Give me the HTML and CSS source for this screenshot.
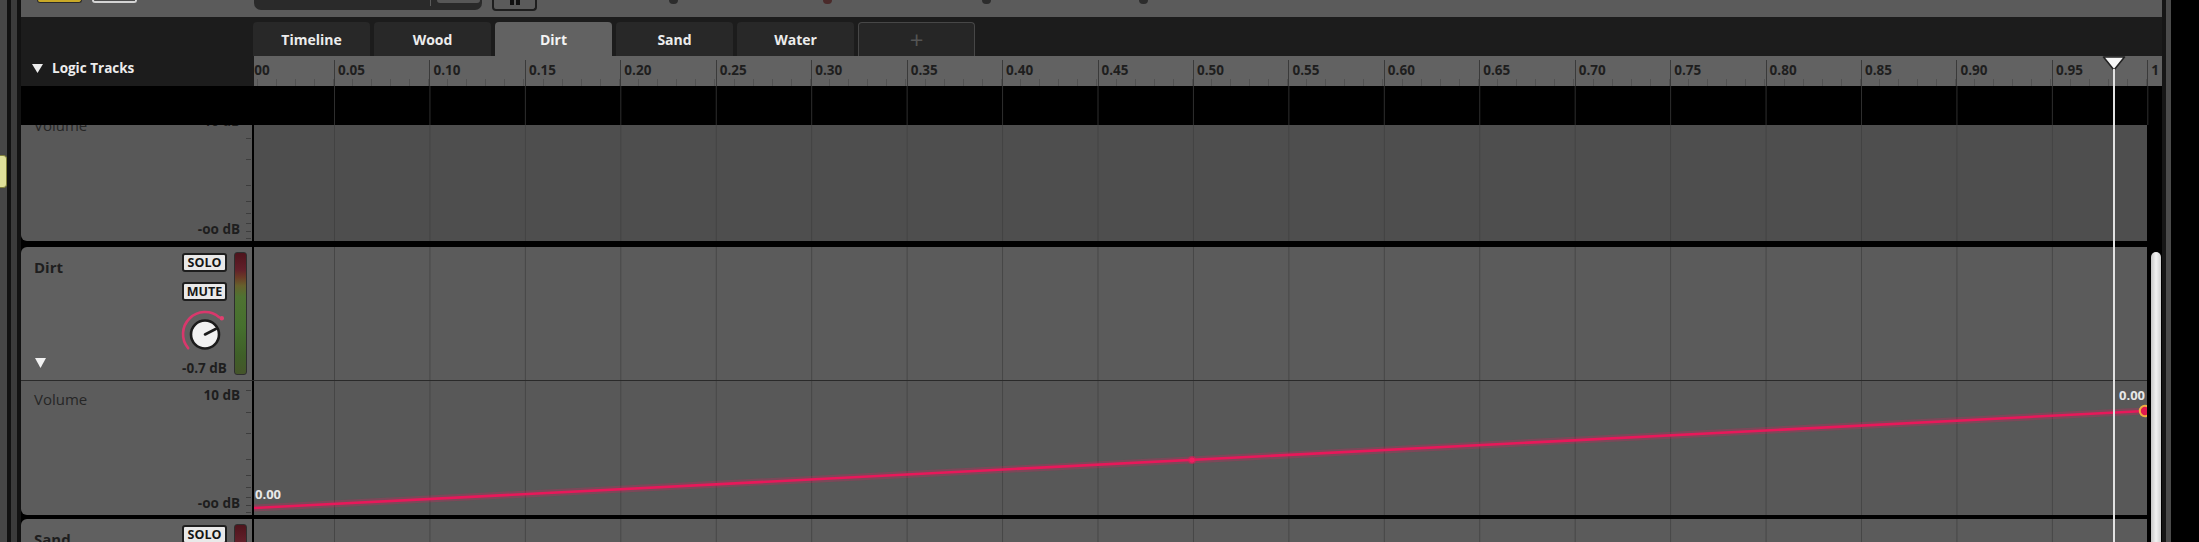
FILE: index.html
```html
<!DOCTYPE html>
<html>
<head>
<meta charset="utf-8">
<link rel="stylesheet" href="styles.css">
</head>
<body>
<div class="app">
  <div class="edge">
    <div class="edge-a"><div class="note"></div></div>
    <div class="edge-b"></div>
    <div class="edge-c"></div>
    <div class="edge-d"></div>
  </div>

  <div class="main">
    <div class="topbar">
      <div class="tb-yellow"></div>
      <div class="tb-white"></div>
      <div class="tb-display"><div class="tb-div"></div><div class="tb-sub"></div></div>
      <div class="tb-pause"><span></span><span></span></div>
      <div class="tb-knob k1"></div>
      <div class="tb-knob k2"></div>
      <div class="tb-knob k3"></div>
      <div class="tb-knob k4"></div>
    </div>

    <div class="header">
      <div class="logic-head">
        <svg class="tri" width="11" height="9" viewBox="0 0 11 9"><polygon points="0,0 11,0 5.5,9" fill="#ececec"/></svg>
        <span>Logic Tracks</span>
      </div>
      <div class="head-right">
        <div class="tabs">
          <div class="tab">Timeline</div>
          <div class="tab">Wood</div>
          <div class="tab active">Dirt</div>
          <div class="tab">Sand</div>
          <div class="tab">Water</div>
          <div class="tab add">+</div>
        </div>
        <div class="ruler">
          <div class="ruler-track">
            <div class="tick">0.00</div><div class="tick">0.05</div><div class="tick">0.10</div>
            <div class="tick">0.15</div><div class="tick">0.20</div><div class="tick">0.25</div>
            <div class="tick">0.30</div><div class="tick">0.35</div><div class="tick">0.40</div>
            <div class="tick">0.45</div><div class="tick">0.50</div><div class="tick">0.55</div>
            <div class="tick">0.60</div><div class="tick">0.65</div><div class="tick">0.70</div>
            <div class="tick">0.75</div><div class="tick">0.80</div><div class="tick">0.85</div>
            <div class="tick">0.90</div><div class="tick">0.95</div><div class="tick">1</div>
          </div>
        </div>
      </div>
    </div>

    <div class="band">
      <div class="band-left"></div>
      <div class="band-grid"></div>
    </div>

    <div class="tracks">
      <div class="track-list">
        <div class="scroller">
          <!-- Volume lane (previous track) -->
          <div class="row vol dim">
            <div class="panel vol-panel round-bl">
              <div class="lane-info">
                <div class="lane-top"><span class="lane-name">Volume</span><span class="db db-top">10 dB</span></div>
                <span class="db db-bottom">-oo dB</span>
              </div>
              <svg class="scale" width="6" height="134" viewBox="0 0 6 134">
                <g stroke="#3d3d3d" stroke-width="1">
                  <line x1="0" y1="9.5" x2="5" y2="9.5"/><line x1="0" y1="31.5" x2="5" y2="31.5"/>
                  <line x1="0" y1="52.5" x2="5" y2="52.5"/><line x1="0" y1="78.5" x2="5" y2="78.5"/>
                  <line x1="0" y1="94.5" x2="5" y2="94.5"/><line x1="0" y1="106.5" x2="5" y2="106.5"/>
                  <line x1="0" y1="116.5" x2="5" y2="116.5"/><line x1="0" y1="124.5" x2="5" y2="124.5"/>
                  <line x1="0" y1="131.5" x2="5" y2="131.5"/>
                </g>
              </svg>
            </div>
            <div class="lane"></div>
          </div>
          <div class="sep6"></div>

          <!-- Dirt track -->
          <div class="row trk">
            <div class="panel trk-panel round-tl">
              <div class="tname-col">
                <span class="tname">Dirt</span>
                <svg class="expand" width="11" height="10" viewBox="0 0 11 10"><polygon points="0,0 11,0 5.5,10" fill="#f2f2f2"/></svg>
              </div>
              <div class="ctrl-col">
                <div class="btn">SOLO</div>
                <div class="btn mute">MUTE</div>
                <svg class="knob" width="50" height="50" viewBox="0 0 50 50">
                  <path d="M 8.15 39.14 A 22 22 0 0 1 39.14 8.15" fill="none" stroke="#d8386c" stroke-width="2.6" stroke-linecap="round"/>
                  <circle cx="41.8" cy="9.3" r="2.2" fill="#e0406f"/>
                  <circle cx="25" cy="25.5" r="14" fill="#f1f1f1" stroke="#1b1b1b" stroke-width="2.6"/>
                  <line x1="25" y1="25.5" x2="35.7" y2="20" stroke="#1b1b1b" stroke-width="2.6" stroke-linecap="round"/>
                </svg>
                <span class="knob-val">-0.7 dB</span>
              </div>
              <div class="meter"></div>
            </div>
            <div class="lane"></div>
          </div>
          <div class="line"></div>

          <!-- Dirt volume lane -->
          <div class="row vol">
            <div class="panel vol-panel round-bl">
              <div class="lane-info">
                <div class="lane-top"><span class="lane-name">Volume</span><span class="db db-top">10 dB</span></div>
                <span class="db db-bottom">-oo dB</span>
              </div>
              <svg class="scale" width="6" height="134" viewBox="0 0 6 134">
                <g stroke="#3d3d3d" stroke-width="1">
                  <line x1="0" y1="9.5" x2="5" y2="9.5"/><line x1="0" y1="31.5" x2="5" y2="31.5"/>
                  <line x1="0" y1="52.5" x2="5" y2="52.5"/><line x1="0" y1="78.5" x2="5" y2="78.5"/>
                  <line x1="0" y1="94.5" x2="5" y2="94.5"/><line x1="0" y1="106.5" x2="5" y2="106.5"/>
                  <line x1="0" y1="116.5" x2="5" y2="116.5"/><line x1="0" y1="124.5" x2="5" y2="124.5"/>
                  <line x1="0" y1="131.5" x2="5" y2="131.5"/>
                </g>
              </svg>
            </div>
            <div class="lane">
              <svg class="auto" width="1893" height="134" viewBox="0 0 1893 134">
                <line x1="0" y1="127" x2="1891" y2="30" stroke="#e8185a" stroke-opacity="0.25" stroke-width="7"/>
                <line x1="0" y1="127" x2="1891" y2="30" stroke="#e8185a" stroke-width="2.6"/>
                <circle cx="938" cy="79.1" r="4" fill="#e8185a" fill-opacity="0.5"/>
                <circle cx="938" cy="79.1" r="2.6" fill="#f01d60"/>
                <circle cx="1891" cy="30" r="5.2" fill="#e0194f" stroke="#f0b040" stroke-width="2"/>
              </svg>
              <span class="pt-label pt-start">0.00</span>
              <span class="pt-label pt-end">0.00</span>
            </div>
          </div>
          <div class="sep4"></div>

          <!-- Sand track -->
          <div class="row trk">
            <div class="panel trk-panel round-tl">
              <div class="tname-col">
                <span class="tname">Sand</span>
              </div>
              <div class="ctrl-col">
                <div class="btn">SOLO</div>
                <div class="btn mute">MUTE</div>
              </div>
              <div class="meter"></div>
            </div>
            <div class="lane"></div>
          </div>
        </div>
      </div>
      <div class="scroll-col"><div class="thumb"></div></div>
    </div>

    <div class="playhead">
      <svg width="24" height="15" viewBox="0 0 24 15"><polygon points="1.5,1 22.5,1 12,14" fill="#f6f6f6" stroke="#222" stroke-width="1.6" stroke-linejoin="round"/></svg>
      <div class="ph-line"></div>
    </div>
  </div>

  <div class="right-edge">
    <div class="re-a"></div>
    <div class="re-b"></div>
    <div class="re-c"></div>
  </div>
</div>
</body>
</html>
```

FILE: styles.css
```css
* { box-sizing: border-box; margin: 0; padding: 0; }

html, body {
  width: 2199px;
  height: 542px;
  overflow: hidden;
  background: #000;
}

body {
  font-family: "Open Sans", "Liberation Sans", sans-serif;
}

.app {
  display: flex;
  height: 542px;
}

/* left window edge */
.edge { display: flex; width: 21px; flex: none; }
.edge-a { width: 7px; background: #474747; }
.edge-b { width: 4px; background: #121212; }
.edge-c { width: 6px; background: #3b3b3b; }
.edge-d { width: 4px; background: #121212; }
.note {
  margin-top: 155px;
  width: 7px;
  height: 33px;
  background: #dfe09a;
  border: 1px solid #80803c;
  border-left: none;
  border-radius: 0 4px 4px 0;
}

/* right window edge */
.right-edge { flex: 1; display: flex; }
.re-a { width: 4px; background: #161616; }
.re-b { width: 5px; background: #4b4b4b; }
.re-c { flex: 1; background: #000; }

.main {
  width: 2141px;
  flex: none;
  display: flex;
  flex-direction: column;
  position: relative;
}

/* top transport bar (mostly scrolled off) */
.topbar {
  height: 17px;
  flex: none;
  background: #5b5b5b;
  display: flex;
  align-items: flex-start;
}
.tb-yellow {
  margin-left: 16px;
  width: 45px;
  height: 3px;
  background: #c9a927;
  border: 1px solid #2a2a2a;
  border-top: none;
  border-radius: 0 0 3px 3px;
}
.tb-white {
  margin-left: 10px;
  width: 45px;
  height: 3px;
  background: #4c4c4c;
  border: 2px solid #d4d4d4;
  border-top: none;
  border-radius: 0 0 3px 3px;
}
.tb-display {
  margin-left: 117px;
  width: 228px;
  height: 10px;
  background: #2a2a2a;
  border-radius: 0 0 7px 7px;
  display: flex;
  align-items: flex-start;
}
.tb-div { margin-left: 176px; width: 1px; height: 6px; background: #5a5a5a; }
.tb-sub { margin-left: 6px; width: 43px; height: 3px; background: #575757; border-radius: 0 0 3px 3px; }
.tb-pause {
  margin-left: 10px;
  width: 45px;
  height: 11px;
  border: 2px solid #1e1e1e;
  border-top: none;
  border-radius: 0 0 4px 4px;
  display: flex;
  justify-content: center;
  gap: 2px;
}
.tb-pause span { width: 4px; height: 5px; background: #111; }
.tb-knob { width: 9px; height: 4px; background: #2c2c2c; border-radius: 0 0 5px 5px; }
.k1 { margin-left: 132px; }
.k2 { margin-left: 145px; background: #4a2a2a; }
.k3 { margin-left: 150px; }
.k4 { margin-left: 148px; }

/* header: logic tracks + tabs + ruler */
.header { height: 69px; flex: none; display: flex; }
.logic-head {
  width: 233px;
  flex: none;
  background: #1c1c1c;
  display: flex;
  align-items: center;
  align-self: stretch;
  padding: 42px 0 9px 11px;
  gap: 9px;
  color: #ececec;
  font-weight: 700;
  font-size: 13.5px;
  line-height: 18px;
}
.tri { flex: none; }

.head-right { flex: 1; min-width: 0; display: flex; flex-direction: column; }
.tabs {
  height: 39px;
  background: #1c1c1c;
  display: flex;
  align-items: flex-end;
  gap: 4px;
  margin-left: -1px;
}
.tab {
  width: 117px;
  height: 34px;
  border-radius: 4px 4px 0 0;
  background: #282828;
  color: #ececec;
  font-weight: 700;
  font-size: 14px;
  display: flex;
  align-items: center;
  justify-content: center;
}
.tab.active { background: #626262; color: #f4f4f4; }
.tab.add {
  background: #262626;
  border: 1px solid #474747;
  border-bottom: none;
  color: #545454;
  font-weight: 400;
  font-size: 24px;
}

.ruler { height: 30px; background: #626262; overflow: hidden; }
.ruler-track { display: flex; margin-left: -15.4px; }
.tick {
  flex: none;
  width: 95.45px;
  height: 30px;
  padding: 5px 0 0 4px;
  font-size: 13.5px;
  font-weight: 700;
  line-height: 18px;
  color: #1e1e1e;
  background:
    linear-gradient(#3a3a3a, #3a3a3a) 0 4px / 1px 26px no-repeat,
    repeating-linear-gradient(to right, transparent 0 18.09px, #525252 18.09px 19.09px) 0 23px / 100% 7px no-repeat;
}

/* empty logic track band */
.band { height: 39px; flex: none; display: flex; background: #000; }
.band-left { width: 233px; flex: none; }
.band-grid {
  flex: 1;
  background-image: linear-gradient(to right, #2e2e2e 0 1px, transparent 1px);
  background-size: 95.45px 100%;
  background-position: 80px 0;
}

/* tracks */
.tracks { flex: 1; min-height: 0; display: flex; overflow: hidden; }
.track-list { width: 2126px; flex: none; overflow: hidden; background: #000; }
.scroller { margin-top: -18px; display: flex; flex-direction: column; }

.row { display: flex; gap: 2px; flex: none; }
.row.vol { height: 134px; }
.row.trk { height: 133px; }
.sep6 { height: 6px; flex: none; }
.sep4 { height: 4px; flex: none; }
.line { height: 1px; flex: none; background: #2a2a2a; }

.panel { width: 231px; flex: none; display: flex; }
.round-bl { border-radius: 0 0 0 6px; }
.round-tl { border-radius: 6px 0 0 0; }

.lane {
  flex: 1;
  position: relative;
  overflow: hidden;
  background-color: #585858;
  background-image: linear-gradient(to right, #464646 0 1px, transparent 1px);
  background-size: 95.45px 100%;
  background-position: 80px 0;
}

/* volume lanes */
.vol-panel { background: #5c5c5c; }
.row.dim .vol-panel { background: #585858; }
.row.dim .lane { background-color: #4e4e4e; background-image: linear-gradient(to right, #424242 0 1px, transparent 1px); }
.lane-info {
  flex: 1;
  display: flex;
  flex-direction: column;
  padding: 0 6px 4px 13px;
}
.lane-top { display: flex; justify-content: space-between; align-items: flex-start; }
.lane-name {
  margin-top: 8px;
  font-size: 15px;
  line-height: 20px;
  color: #262626;
}
.db {
  font-size: 13.5px;
  font-weight: 700;
  line-height: 16px;
  color: #1e1e1e;
}
.db-top { margin-top: 6px; }
.db-bottom { margin-top: auto; align-self: flex-end; }
.scale { flex: none; }

/* instrument tracks */
.trk-panel { background: #606060; padding: 6px 5px 5px 13px; }
.row.trk .lane { background-color: #5b5b5b; }
.tname-col {
  flex: 1;
  display: flex;
  flex-direction: column;
  justify-content: space-between;
  align-items: flex-start;
}
.tname {
  margin-top: 4px;
  font-size: 15px;
  font-weight: 700;
  line-height: 20px;
  color: #1e1e1e;
}
.expand { margin: 0 0 7px 1px; }
.ctrl-col {
  width: 47px;
  flex: none;
  display: flex;
  flex-direction: column;
  align-items: center;
}
.btn {
  width: 45px;
  height: 19px;
  background: #e9e9e9;
  border: 2px solid #1e1e1e;
  border-radius: 3px;
  font-size: 12.5px;
  font-weight: 700;
  line-height: 15px;
  color: #151515;
  text-align: center;
}
.btn.mute { margin-top: 10px; }
.knob { margin-top: 8px; flex: none; }
.knob-val {
  margin-top: 1px;
  font-size: 13.5px;
  font-weight: 700;
  line-height: 16px;
  color: #1e1e1e;
  white-space: nowrap;
}
.meter {
  width: 13px;
  flex: none;
  margin: -1px 0 0 6px;
  border: 1px solid #2e2e2e;
  border-radius: 3px;
  background: linear-gradient(to bottom,
    #4e141c 0%, #62202a 14%, #6a3a26 20%, #66602c 27%, #4f7232 36%, #46702e 60%, #3f5f28 85%, #45552a 100%);
}

/* automation curve */
.auto { position: absolute; left: 0; top: 0; }
.pt-label {
  position: absolute;
  font-size: 13px;
  font-weight: 700;
  line-height: 16px;
  color: #e8e8e8;
}
.pt-start { left: 1px; top: 105px; }
.pt-end { left: 1865px; top: 6px; }

/* scrollbar */
.scroll-col { flex: 1; display: flex; padding: 127px 1px 0 4px; background: #000; }
.thumb {
  flex: 1;
  border-radius: 5px 5px 0 0;
  background: linear-gradient(to right, #c6c6c6, #f2f2f2 50%, #d0d0d0);
}

/* playhead overlay */
.playhead {
  position: absolute;
  left: 2081px;
  top: 56px;
  bottom: 0;
  width: 24px;
  display: flex;
  flex-direction: column;
  align-items: center;
}
.ph-line { width: 2px; flex: 1; margin-top: -2px; background: #e2e2e2; }
```
